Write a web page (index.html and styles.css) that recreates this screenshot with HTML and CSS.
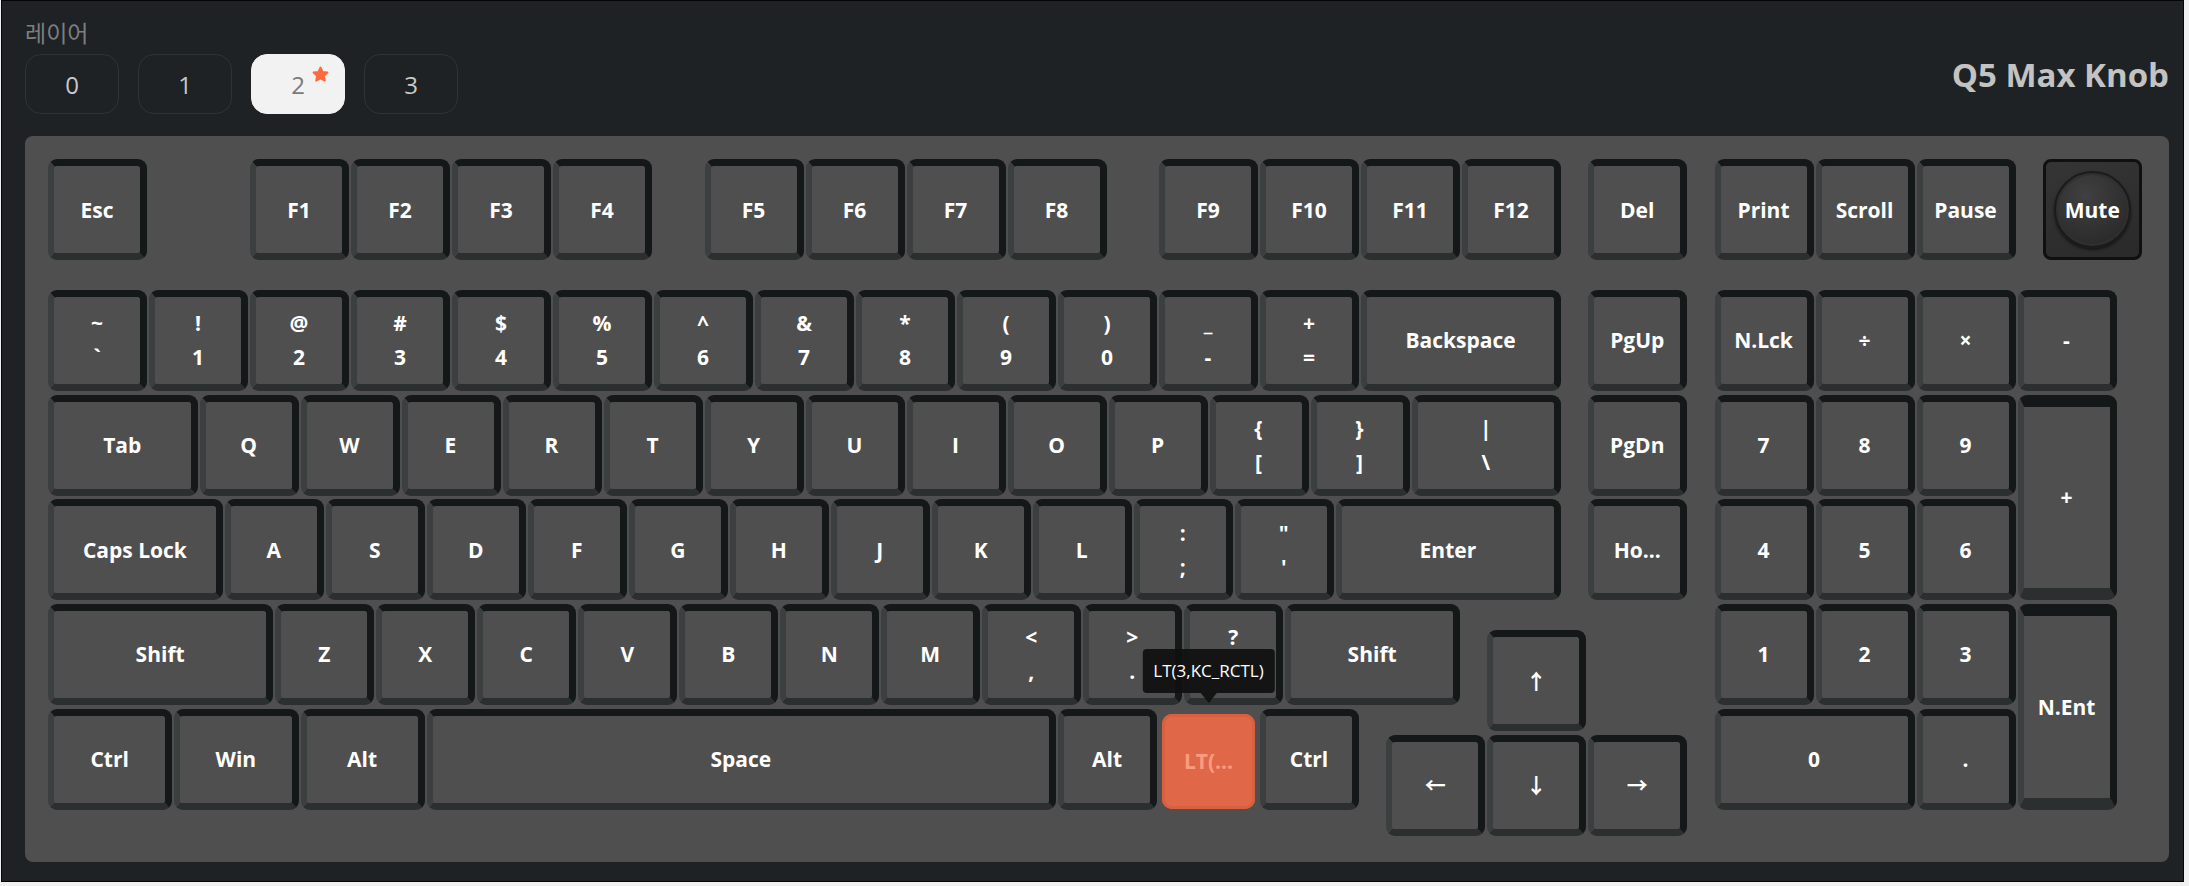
FILE: index.html
```html
<!DOCTYPE html>
<html lang="ko">
<head>
    <meta charset="UTF-8">
    <meta name="viewport" content="width=device-width, initial-scale=1.0">
    <title>Q5 Max Knob</title>
    <link rel="stylesheet" href="styles.css">
</head>
<body>
<div class="app">
    <div class="header">
        <div class="layers">
            <div class="layers-label">레이어</div>
            <div class="layer-list">
                <button class="layer-btn">0</button>
                <button class="layer-btn">1</button>
                <button class="layer-btn active">
                    <span class="layer-num">2
                        <svg class="star" viewBox="0 0 24 24"><path d="M12 3l2.7 5.7 6.1.8-4.5 4.2 1.2 6.1L12 16.8l-5.5 3 1.2-6.1-4.5-4.2 6.1-.8z"/></svg>
                    </span>
                </button>
                <button class="layer-btn">3</button>
            </div>
        </div>
        <h1 class="board-name">Q5 Max Knob</h1>
    </div>

    <div class="plate">
        <div class="keyboard" id="keyboard"></div>
    </div>
</div>

<script>
    // [legend, x, y, w, h, kind] in key units
    const layout = [
        ['Esc', 0, 0],
        ['F1', 2, 0], ['F2', 3, 0], ['F3', 4, 0], ['F4', 5, 0],
        ['F5', 6.5, 0], ['F6', 7.5, 0], ['F7', 8.5, 0], ['F8', 9.5, 0],
        ['F9', 11, 0], ['F10', 12, 0], ['F11', 13, 0], ['F12', 14, 0],
        ['Del', 15.25, 0],
        ['Print', 16.5, 0], ['Scroll', 17.5, 0], ['Pause', 18.5, 0],
        ['Mute', 19.75, 0, 1, 1, 'knob'],

        ['~\n`', 0, 1.25], ['!\n1', 1, 1.25], ['@\n2', 2, 1.25], ['#\n3', 3, 1.25],
        ['$\n4', 4, 1.25], ['%\n5', 5, 1.25], ['^\n6', 6, 1.25], ['&\n7', 7, 1.25],
        ['*\n8', 8, 1.25], ['(\n9', 9, 1.25], [')\n0', 10, 1.25], ['_\n-', 11, 1.25],
        ['+\n=', 12, 1.25], ['Backspace', 13, 1.25, 2],
        ['PgUp', 15.25, 1.25],
        ['N.Lck', 16.5, 1.25], ['÷', 17.5, 1.25], ['×', 18.5, 1.25], ['-', 19.5, 1.25],

        ['Tab', 0, 2.25, 1.5], ['Q', 1.5, 2.25], ['W', 2.5, 2.25], ['E', 3.5, 2.25],
        ['R', 4.5, 2.25], ['T', 5.5, 2.25], ['Y', 6.5, 2.25], ['U', 7.5, 2.25],
        ['I', 8.5, 2.25], ['O', 9.5, 2.25], ['P', 10.5, 2.25], ['{\n[', 11.5, 2.25],
        ['}\n]', 12.5, 2.25], ['|\n\\', 13.5, 2.25, 1.5],
        ['PgDn', 15.25, 2.25],
        ['7', 16.5, 2.25], ['8', 17.5, 2.25], ['9', 18.5, 2.25], ['+', 19.5, 2.25, 1, 2],

        ['Caps Lock', 0, 3.25, 1.75], ['A', 1.75, 3.25], ['S', 2.75, 3.25], ['D', 3.75, 3.25],
        ['F', 4.75, 3.25], ['G', 5.75, 3.25], ['H', 6.75, 3.25], ['J', 7.75, 3.25],
        ['K', 8.75, 3.25], ['L', 9.75, 3.25], [':\n;', 10.75, 3.25], ['"\n\'', 11.75, 3.25],
        ['Enter', 12.75, 3.25, 2.25],
        ['Ho...', 15.25, 3.25],
        ['4', 16.5, 3.25], ['5', 17.5, 3.25], ['6', 18.5, 3.25],

        ['Shift', 0, 4.25, 2.25], ['Z', 2.25, 4.25], ['X', 3.25, 4.25], ['C', 4.25, 4.25],
        ['V', 5.25, 4.25], ['B', 6.25, 4.25], ['N', 7.25, 4.25], ['M', 8.25, 4.25],
        ['<\n,', 9.25, 4.25], ['>\n.', 10.25, 4.25], ['?\n/', 11.25, 4.25],
        ['Shift', 12.25, 4.25, 1.75],
        ['↑', 14.25, 4.5],
        ['1', 16.5, 4.25], ['2', 17.5, 4.25], ['3', 18.5, 4.25], ['N.Ent', 19.5, 4.25, 1, 2],

        ['Ctrl', 0, 5.25, 1.25], ['Win', 1.25, 5.25, 1.25], ['Alt', 2.5, 5.25, 1.25],
        ['Space', 3.75, 5.25, 6.25], ['Alt', 10, 5.25],
        ['LT(...', 11, 5.25, 1, 1, 'active'],
        ['Ctrl', 12, 5.25],
        ['←', 13.25, 5.5], ['↓', 14.25, 5.5], ['→', 15.25, 5.5],
        ['0', 16.5, 5.25, 2], ['.', 18.5, 5.25]
    ];

    const keyboard = document.getElementById('keyboard');

    layout.forEach(([legend, x, y, w = 1, h = 1, kind]) => {
        const key = document.createElement('div');
        key.className = 'key';
        if (h > 1) key.classList.add('tall');
        if (kind) key.classList.add(kind);
        key.style.gridColumn = `${x * 4 + 1} / span ${w * 4}`;
        key.style.gridRow = `${y * 4 + 1} / span ${h * 4}`;

        const face = kind === 'knob' ? document.createElement('div') : key;
        if (kind === 'knob') {
            face.className = 'knob-dial';
            key.appendChild(face);
        }

        legend.split('\n').forEach(text => {
            const span = document.createElement('span');
            span.textContent = text;
            face.appendChild(span);
        });

        if (kind === 'active') {
            const tip = document.createElement('div');
            tip.className = 'tooltip';
            tip.textContent = 'LT(3,KC_RCTL)';
            key.appendChild(tip);
        }

        keyboard.appendChild(key);
    });
</script>
</body>
</html>
```

FILE: styles.css
```css
:root {
    --page-bg: #1f2224;
    --plate: #4f4f4f;
    --key-face: #4f4f4f;
    --key-dark: #141819;
    --key-bottom: #2b2f30;
    --key-left: #3c3f40;
    --accent: #ff6a3d;
    --unit: 25.2625px;
    --row: 26.175px;
}

body {
    margin: 0;
    padding-left: 1px;
    background: #f0f0f0;
    font-family: "Open Sans", "Noto Sans CJK KR", sans-serif;
}

.app {
    width: 2183px;
    height: 882px;
    box-sizing: border-box;
    border: 1px solid #050505;
    background: var(--page-bg);
    padding: 17px 14px 0 23px;
}

.header {
    display: flex;
    justify-content: space-between;
    align-items: flex-start;
}

.layers-label {
    font-size: 23px;
    line-height: 30px;
    color: #7c7e7f;
}

.layer-list {
    display: flex;
    gap: 19px;
    margin-top: 6px;
}

.layer-btn {
    width: 94px;
    height: 60px;
    border: 1px solid #2f3335;
    border-radius: 16px;
    background: transparent;
    color: #c9c9c9;
    font-family: inherit;
    font-size: 24px;
    padding: 0;
    cursor: pointer;
}

.layer-btn.active {
    background: #f2f2f2;
    border-color: #f2f2f2;
    color: #7a7a7a;
}

.layer-num {
    position: relative;
}

.star {
    position: absolute;
    width: 19px;
    height: 19px;
    top: -3px;
    right: -25px;
    fill: var(--accent);
    stroke: var(--accent);
    stroke-width: 2.4;
    stroke-linejoin: round;
}

.board-name {
    margin: 37px 0 0;
    font-size: 33px;
    line-height: 40px;
    font-weight: 700;
    color: #c3c3c3;
}

.plate {
    margin-top: 22px;
    background: var(--plate);
    border-radius: 8px;
    padding: 23px;
}

.keyboard {
    display: grid;
    grid-template-columns: repeat(83, var(--unit));
    grid-template-rows: repeat(26, var(--row));
}

.key {
    position: relative;
    box-sizing: border-box;
    margin: 0 2px 3.7px 0;
    border-style: solid;
    border-width: 7px 7px 7px 6px;
    border-color: var(--key-dark) var(--key-dark) var(--key-bottom) var(--key-left);
    border-radius: 9px;
    background: var(--key-face);
    display: flex;
    flex-direction: column;
    align-items: center;
    justify-content: center;
    gap: 10px;
    color: #fff;
    font-size: 21px;
    font-weight: 700;
    line-height: 24px;
    white-space: nowrap;
}

.key.tall {
    border-top-width: 12px;
    border-bottom-width: 12px;
}

.key.knob {
    border: 3px solid #101010;
    border-radius: 8px;
    background: linear-gradient(160deg, #353535, #2a2a2a);
}

.knob-dial {
    width: 77px;
    height: 77px;
    box-sizing: border-box;
    border-radius: 50%;
    border: 2px solid #1b1b1b;
    background: radial-gradient(circle at 40% 30%, #404040, #2b2b2b 75%);
    box-shadow: 0 2px 3px rgba(0, 0, 0, 0.55), inset 0 0 0 2px #303030;
    display: flex;
    align-items: center;
    justify-content: center;
}

.key.active {
    border: none;
    margin: 5px 5px 4.7px 3px;
    border-radius: 10px;
    background: #e06849;
    box-shadow: inset 0 0 0 3px #d8603f;
    color: #f99b80;
}

.tooltip {
    position: absolute;
    z-index: 10;
    left: 50%;
    bottom: calc(100% + 21px);
    transform: translateX(-50%);
    height: 44px;
    padding: 0 11px;
    border-radius: 4px;
    background: rgba(16, 16, 16, 0.93);
    color: #fff;
    font-size: 17px;
    font-weight: 400;
    line-height: 44px;
}

.tooltip::after {
    content: "";
    position: absolute;
    top: 100%;
    left: 50%;
    margin-left: -8px;
    border: 8px solid transparent;
    border-top: 10px solid rgba(16, 16, 16, 0.93);
    border-bottom: 0;
}
```
